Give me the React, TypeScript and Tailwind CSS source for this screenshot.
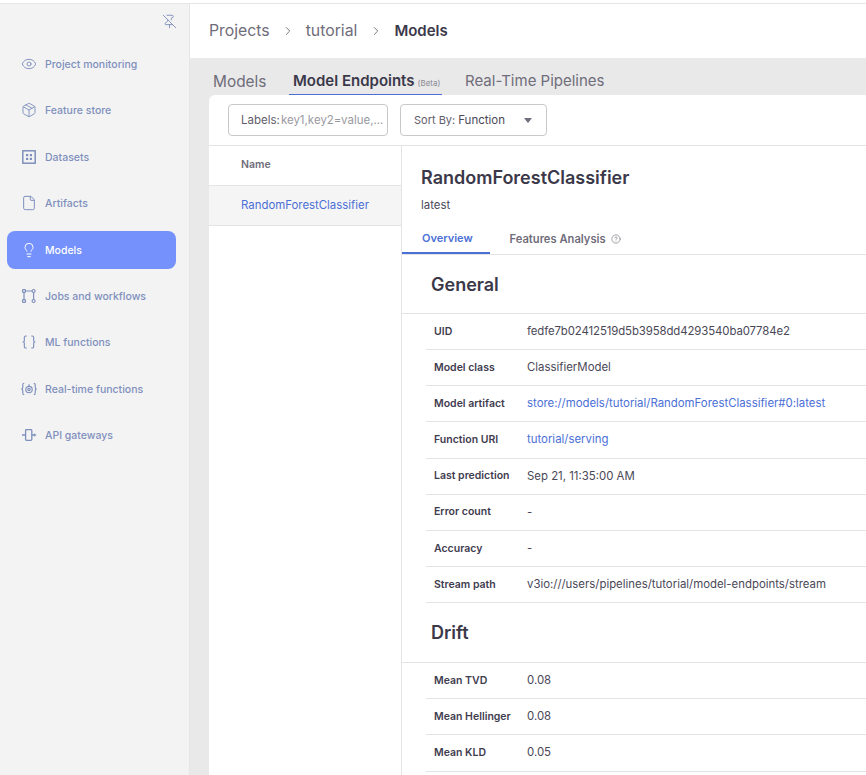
import { Eye, Package, Lightbulb, PinOff, ChevronRight, CircleHelp, Braces, File } from "lucide-react";
import type { ReactNode } from "react";

const iconCls = "w-4 h-4";

function DatasetsIcon() {
  return (
    <svg viewBox="0 0 16 16" className={iconCls} fill="none" stroke="currentColor" strokeWidth="1.5">
      <rect x="1.8" y="1.8" width="12.4" height="12.4" />
      <rect x="5" y="5" width="2.2" height="2.2" fill="currentColor" stroke="none" />
      <rect x="8.8" y="5" width="2.2" height="2.2" fill="currentColor" stroke="none" />
      <rect x="5" y="8.8" width="2.2" height="2.2" fill="currentColor" stroke="none" />
      <rect x="8.8" y="8.8" width="2.2" height="2.2" fill="currentColor" stroke="none" />
    </svg>
  );
}

function JobsIcon() {
  return (
    <svg viewBox="0 0 16 16" className={iconCls} fill="none" stroke="currentColor" strokeWidth="1.2">
      <rect x="1.6" y="1.6" width="2.8" height="2.8" rx="0.6" />
      <circle cx="12.6" cy="3" r="1.5" />
      <rect x="1.6" y="11.6" width="2.8" height="2.8" rx="0.6" />
      <circle cx="12.6" cy="13" r="1.5" />
      <path d="M4.5 3h6.6M3 4.5v7M12.6 4.5v7" />
    </svg>
  );
}

function RealtimeIcon() {
  return (
    <svg viewBox="0 0 18 16" className="w-[18px] h-4" fill="none" stroke="currentColor" strokeWidth="1.3">
      <path d="M3.6 1.6c-1.3 0-1.6.8-1.6 2v2.6c0 1-.5 1.8-1.5 2 1 .2 1.5 1 1.5 2v2.2c0 1.2.3 2 1.6 2" />
      <path d="M14.4 1.6c1.3 0 1.6.8 1.6 2v2.6c0 1 .5 1.8 1.5 2-1 .2-1.5 1-1.5 2v2.2c0 1.2-.3 2-1.6 2" />
      <circle cx="9" cy="8.6" r="3.6" />
      <circle cx="9" cy="8.6" r="1.3" />
      <path d="M9 2.6V5" />
    </svg>
  );
}

function ApiIcon() {
  return (
    <svg viewBox="0 0 16 16" className={iconCls} fill="none" stroke="currentColor" strokeWidth="1.3">
      <rect x="4.6" y="2.6" width="6.2" height="10.8" rx="0.8" />
      <path d="M1 8h3.6M10.8 8h3" />
      <path d="M13.2 6.2 15.4 8l-2.2 1.8z" fill="currentColor" stroke="none" />
    </svg>
  );
}

const navItems: { label: string; icon: ReactNode; h: string; active?: boolean }[] = [
  { label: "Project monitoring", icon: <Eye className={iconCls} strokeWidth={1.4} />, h: "h-[46px]" },
  { label: "Feature store", icon: <Package className={iconCls} strokeWidth={1.4} />, h: "h-[46px]" },
  { label: "Datasets", icon: <DatasetsIcon />, h: "h-[47px]" },
  { label: "Artifacts", icon: <File className={iconCls} strokeWidth={1.5} />, h: "h-[46px]" },
  { label: "Models", icon: <Lightbulb className={iconCls} strokeWidth={1.5} />, h: "h-[47px]", active: true },
  { label: "Jobs and workflows", icon: <JobsIcon />, h: "h-[46px]" },
  { label: "ML functions", icon: <Braces className={iconCls} strokeWidth={1.7} />, h: "h-[46px]" },
  { label: "Real-time functions", icon: <RealtimeIcon />, h: "h-[47px]" },
  { label: "API gateways", icon: <ApiIcon />, h: "h-[46px]" },
];

const general = [
  { label: "UID", value: "fedfe7b02412519d5b3958dd4293540ba07784e2", tight: true },
  { label: "Model class", value: "ClassifierModel" },
  { label: "Model artifact", value: "store://models/tutorial/RandomForestClassifier#0:latest", link: true },
  { label: "Function URI", value: "tutorial/serving", link: true },
  { label: "Last prediction", value: "Sep 21, 11:35:00 AM" },
  { label: "Error count", value: "-" },
  { label: "Accuracy", value: "-" },
  { label: "Stream path", value: "v3io:///users/pipelines/tutorial/model-endpoints/stream" },
];

const drift = [
  { label: "Mean TVD", value: "0.08" },
  { label: "Mean Hellinger", value: "0.08" },
  { label: "Mean KLD", value: "0.05" },
];

function Row({ label, value, link, tight }: { label: string; value: string; link?: boolean; tight?: boolean }) {
  return (
    <div className="ml-6 h-[36.15px] flex items-center border-b border-[#e4e4e4] whitespace-nowrap">
      <div className="w-[101px] pl-2 text-[10.5px] font-semibold text-[#3f3c4f]">{label}</div>
      <div className={`text-[11.4px] ${tight ? "tracking-[-0.1px]" : ""} ${link ? "text-[#4b6fd6]" : "text-[#4a4857]"}`}>
        {value}
      </div>
    </div>
  );
}

export default function App() {
  return (
    <div className="w-[866px] h-[775px] overflow-hidden bg-white font-['Inter',sans-serif] flex flex-col">
      <div className="h-1 shrink-0 border-b border-[#e6e6e6]" />
      <div className="flex flex-1 min-h-0">
        {/* Sidebar */}
        <aside className="w-[190px] shrink-0 bg-[#f3f3f3] border-r border-[#e6e6e6] pl-[7px] pr-[13px]">
          <div className="h-[37px] flex justify-end pt-[10px] -mr-px text-[#7b8cb8]">
            <PinOff className="w-[15px] h-[15px]" strokeWidth={1.4} />
          </div>
          <nav>
            {navItems.map((item) => (
              <div key={item.label} className={`${item.h} flex items-center`}>
                <div
                  className={`w-full h-[38px] flex items-center rounded-lg pl-[14px] text-[10.5px] font-medium ${
                    item.active ? "bg-[#7591fb] text-white" : "text-[#7f90bd]"
                  }`}
                >
                  <span className="w-4 flex justify-center">{item.icon}</span>
                  <span className="ml-[8px] pt-[2px]">{item.label}</span>
                </div>
              </div>
            ))}
          </nav>
        </aside>

        {/* Main */}
        <main className="flex-1 min-w-0 flex flex-col">
          <div className="h-[54px] shrink-0 flex items-center pl-[19px] text-[15.8px]">
            <span className="text-[#6f6d7a]">Projects</span>
            <ChevronRight className="w-[14px] h-[14px] mx-[11px] text-[#6f6d7a]" strokeWidth={1.6} />
            <span className="text-[#6f6d7a]">tutorial</span>
            <ChevronRight className="w-[14px] h-[14px] ml-[12px] mr-[11px] text-[#6f6d7a]" strokeWidth={1.6} />
            <span className="text-[15px] font-semibold text-[#3b3849]">Models</span>
          </div>

          <div className="flex-1 min-h-0 bg-[#e9e9e9] flex flex-col">
            {/* Tabs */}
            <div className="h-[37px] shrink-0 flex items-end pl-[23px] text-[15px]">
              <div className="h-[36px] flex items-center w-[76px] text-[15.4px] text-[#6f6d7a] pt-[10px] pb-[1px]">Models</div>
              <div className="h-[36px] flex items-center pl-1 w-[153px] border-b border-[#4b6fd6] pt-[10px] pb-[1px] font-semibold text-[#3b3849] whitespace-nowrap">
                Model Endpoints
                <span className="ml-[3px] mt-[3px] text-[8px] font-normal text-[#8a8894]">(Beta)</span>
              </div>
              <div className="h-[36px] flex items-center ml-[23px] pt-[10px] pb-[1px] text-[#6f6d7a] whitespace-nowrap">Real-Time Pipelines</div>
            </div>

            {/* Card */}
            <div className="flex-1 min-h-0 ml-[19px] bg-white rounded-tl-md flex flex-col">
              <div className="h-[51px] shrink-0 flex items-center pl-[19px] gap-3 border-b border-[#e4e4e4]">
                <div className="w-[160px] h-[32px] flex items-center pl-[12px] pt-px border border-[#c9c9c9] rounded whitespace-nowrap overflow-hidden text-[11.5px]">
                  <span className="text-[#5f5d6b]">Labels:</span>
                  <span className="text-[#9a9aa2] ml-[1px]">key1,key2=value,...</span>
                </div>
                <div className="w-[147px] h-[32px] flex items-center pl-[13px] pt-px border border-[#c9c9c9] rounded whitespace-nowrap">
                  <span className="text-[11px] text-[#5f5d6b]">Sort By:</span>
                  <span className="text-[11.5px] text-[#4a4857] ml-[3px]">Function</span>
                  <span className="ml-[19px] w-0 h-0 border-x-[4px] border-x-transparent border-t-[5px] border-t-[#6f6d7a]" />
                </div>
              </div>

              <div className="flex-1 min-h-0 flex">
                {/* Left list */}
                <div className="w-[193px] shrink-0 border-r border-[#e4e4e4]">
                  <div className="h-[40px] flex items-center pl-8 pb-[2px] border-b border-[#e4e4e4] text-[10.5px] font-semibold text-[#6f6d7a]">
                    Name
                  </div>
                  <div className="h-[40px] flex items-center pl-8 bg-[#f5f5f5] border-b border-[#e4e4e4] text-[11.4px] text-[#4b6fd6]">
                    RandomForestClassifier
                  </div>
                </div>

                {/* Details */}
                <div className="flex-1 min-w-0 overflow-hidden">
                  <div className="h-[109px] flex flex-col border-b border-[#e4e4e4]">
                    <div className="pl-[19px] pt-[19px] text-[18px] leading-[26px] font-semibold text-[#3b3849]">
                      RandomForestClassifier
                    </div>
                    <div className="pl-[19px] mt-[7px] text-[11.4px] leading-[14px] text-[#4a4857]">latest</div>
                    <div className="flex mt-auto text-[11px] font-semibold">
                      <div className="w-[88px] h-[35px] pl-5 pt-[5px] flex items-center border-b-2 border-[#4b6fd6] -mb-px text-[#4b6fd6]">
                        Overview
                      </div>
                      <div className="h-[35px] pl-[19.5px] pt-[5px] flex items-center text-[11.2px] text-[#6f6d7a]">
                        Features Analysis
                        <CircleHelp className="w-[10px] h-[10px] ml-[5px]" strokeWidth={1.5} />
                      </div>
                    </div>
                  </div>
                  <div className="h-[59px] flex items-center pl-[29px] border-b border-[#e4e4e4] text-[18px] font-semibold text-[#3b3849]">
                    General
                  </div>
                  {general.map((r) => (
                    <Row key={r.label} {...r} />
                  ))}
                  <div className="h-[60px] flex items-center pl-[29px] border-b border-[#e4e4e4] text-[18px] font-semibold text-[#3b3849]">
                    Drift
                  </div>
                  {drift.map((r) => (
                    <Row key={r.label} {...r} />
                  ))}
                </div>
              </div>
            </div>
          </div>
        </main>
      </div>
    </div>
  );
}
